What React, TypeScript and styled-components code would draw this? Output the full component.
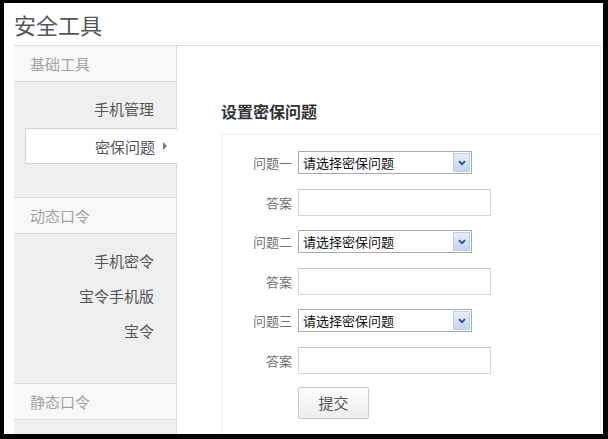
import React from "react";
import styled, { createGlobalStyle } from "styled-components";

const GlobalStyle = createGlobalStyle`
  html, body {
    margin: 0;
    padding: 0;
    background: #000;
  }
  body {
    font-family: "Noto Sans CJK SC", "Noto Sans", sans-serif;
  }
`;

const Frame = styled.div`
  box-sizing: border-box;
  width: 608px;
  height: 439px;
  padding: 3px 5px 5px 4px;
  background: #000;
`;

const Page = styled.div`
  width: 100%;
  height: 100%;
  background: #fff;
  display: flex;
  flex-direction: column;
  overflow: hidden;
`;

const Header = styled.header`
  height: 42px;
  display: flex;
  align-items: center;
  padding-left: 10px;
  font-size: 22px;
  color: #555;
`;

const Body = styled.div`
  flex: 1;
  display: flex;
  margin: 0 2px 0 10px;
  border-top: 1px solid #dedede;
  border-right: 1px solid #f0f0f0;
`;

const Sidebar = styled.nav`
  width: 162px;
  flex-shrink: 0;
  background: #efefef;
  border-right: 1px solid #d8d8d8;
  display: flex;
  flex-direction: column;
`;

const SectionTitle = styled.div<{ $first?: boolean }>`
  height: 35px;
  display: flex;
  align-items: center;
  padding-left: 16px;
  background: #f8f8f8;
  color: #a3a3a3;
  font-size: 15px;
  border-top: ${({ $first }) => ($first ? "none" : "1px solid #dcdcdc")};
  border-bottom: 1px solid #dcdcdc;
`;

const Group = styled.div<{ $pb: number }>`
  display: flex;
  flex-direction: column;
  padding: 9px 0 ${({ $pb }) => $pb}px;
`;

const Item = styled.div<{ $active?: boolean }>`
  height: ${({ $active }) => ($active ? 34 : 35)}px;
  display: flex;
  align-items: center;
  justify-content: flex-end;
  font-size: 15px;
  color: #555;
  padding-right: ${({ $active }) => ($active ? 10 : 22)}px;
  margin-left: ${({ $active }) => ($active ? 11 : 0)}px;
  margin-right: ${({ $active }) => ($active ? -1 : 0)}px;
  margin-top: ${({ $active }) => ($active ? 2 : 0)}px;
  background: ${({ $active }) => ($active ? "#fff" : "transparent")};
  border: ${({ $active }) => ($active ? "1px solid #d4d4d4" : "none")};
  border-right: none;
`;

const Caret = styled.span`
  width: 0;
  height: 0;
  margin-left: 8px;
  border-top: 4px solid transparent;
  border-bottom: 4px solid transparent;
  border-left: 4px solid #777;
`;

const Content = styled.main`
  flex: 1;
  display: flex;
  flex-direction: column;
  padding: 53px 0 0 44px;
`;

const Heading = styled.h2`
  margin: 0;
  height: 24px;
  font-size: 16px;
  font-weight: bold;
  color: #333;
  line-height: 24px;
`;

const Panel = styled.section`
  flex: 1;
  margin-top: 11px;
  border-top: 1px solid #ececec;
  border-left: 1px solid #ececec;
  padding-top: 8px;
  display: flex;
  flex-direction: column;
`;

const Row = styled.div<{ $mt?: number }>`
  height: 39.5px;
  margin-top: ${({ $mt }) => $mt ?? 0}px;
  display: flex;
  align-items: center;
`;

const Label = styled.label`
  width: 70px;
  margin-right: 6px;
  text-align: right;
  font-size: 13px;
  color: #707070;
`;

const SelectBox = styled.div`
  box-sizing: border-box;
  width: 174px;
  height: 23px;
  border: 1px solid #a5acb5;
  display: flex;
  align-items: center;
  justify-content: space-between;
  padding: 1px;
  background: #fff;
`;

const SelectText = styled.span`
  font-size: 13px;
  color: #111;
  padding-left: 3px;
`;

const ArrowButton = styled.span`
  box-sizing: border-box;
  width: 17px;
  height: 19px;
  border: 1px solid #bfd0ea;
  background: linear-gradient(#e6eefb, #c3d4f1);
  display: flex;
  align-items: center;
  justify-content: center;
`;

const TextInput = styled.input`
  box-sizing: border-box;
  width: 193px;
  height: 27px;
  border: 1px solid #d6d6d6;
  border-top-color: #c8c8c8;
  outline: none;
  background: #fff;
`;

const SubmitButton = styled.button`
  box-sizing: border-box;
  width: 71px;
  height: 32px;
  border: 1px solid #cacaca;
  border-radius: 2px;
  background: linear-gradient(#fcfcfc, #ededed);
  font-family: inherit;
  font-size: 15px;
  color: #555;
  padding: 0;
`;

const Chevron = () => (
  <svg width="8" height="6" viewBox="0 0 8 6">
    <path d="M1 1.2 L4 4.2 L7 1.2" fill="none" stroke="#34497a" strokeWidth="1.8" />
  </svg>
);

const Question = ({ label }: { label: string }) => (
  <>
    <Row>
      <Label>{label}</Label>
      <SelectBox>
        <SelectText>请选择密保问题</SelectText>
        <ArrowButton>
          <Chevron />
        </ArrowButton>
      </SelectBox>
    </Row>
    <Row>
      <Label>答案</Label>
      <TextInput type="text" />
    </Row>
  </>
);

const App = () => (
  <>
    <GlobalStyle />
    <Frame>
      <Page>
        <Header>安全工具</Header>
        <Body>
          <Sidebar>
            <SectionTitle $first>基础工具</SectionTitle>
            <Group $pb={33}>
              <Item>手机管理</Item>
              <Item $active>
                密保问题
                <Caret />
              </Item>
            </Group>
            <SectionTitle>动态口令</SectionTitle>
            <Group $pb={35}>
              <Item>手机密令</Item>
              <Item>宝令手机版</Item>
              <Item>宝令</Item>
            </Group>
            <SectionTitle>静态口令</SectionTitle>
          </Sidebar>
          <Content>
            <Heading>设置密保问题</Heading>
            <Panel>
              <Question label="问题一" />
              <Question label="问题二" />
              <Question label="问题三" />
              <Row $mt={3}>
                <Label />
                <SubmitButton>提交</SubmitButton>
              </Row>
            </Panel>
          </Content>
        </Body>
      </Page>
    </Frame>
  </>
);

export default App;
